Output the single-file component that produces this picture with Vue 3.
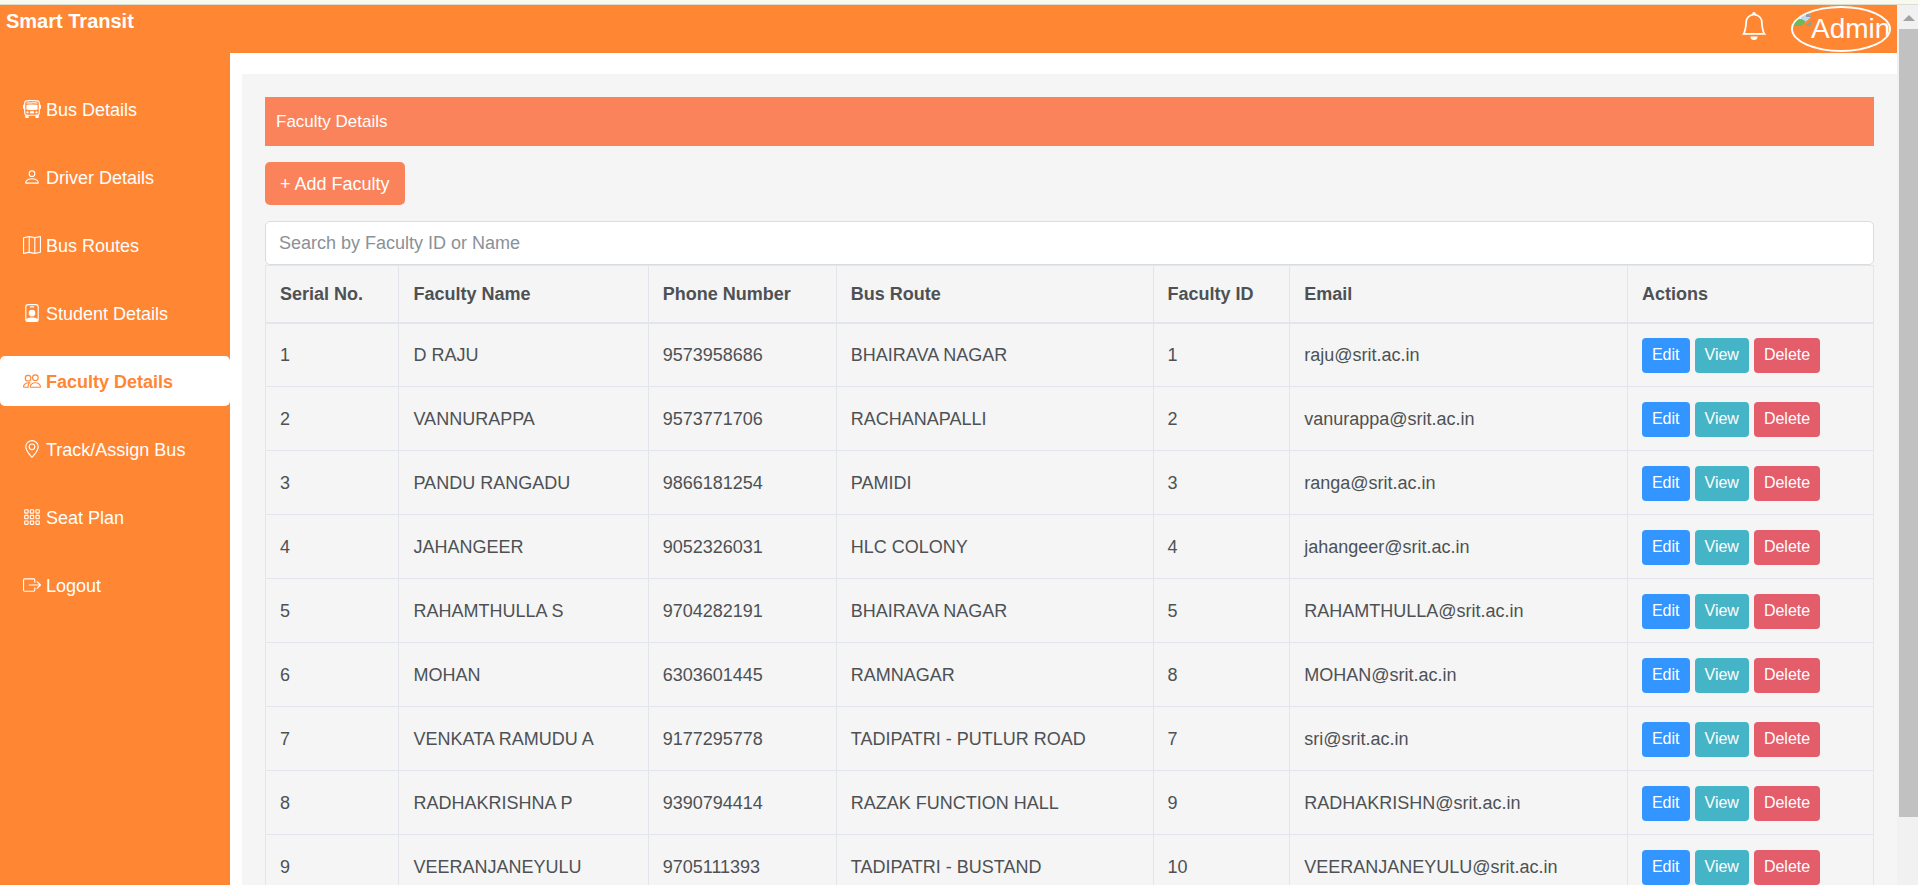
<script setup>
import { ref, computed } from 'vue'

const search = ref('')

const menu = [
  { label: 'Bus Details', icon: 'bus' },
  { label: 'Driver Details', icon: 'person' },
  { label: 'Bus Routes', icon: 'map' },
  { label: 'Student Details', icon: 'badge' },
  { label: 'Faculty Details', icon: 'people', active: true },
  { label: 'Track/Assign Bus', icon: 'pin' },
  { label: 'Seat Plan', icon: 'grid' },
  { label: 'Logout', icon: 'logout' }
]

const icons = {
  bus: [
    'M5 11a1 1 0 1 1-2 0 1 1 0 0 1 2 0m8 0a1 1 0 1 1-2 0 1 1 0 0 1 2 0m-6-1a1 1 0 1 0 0 2h2a1 1 0 1 0 0-2zm1-6c-1.876 0-3.426.109-4.552.226A.5.5 0 0 0 3 4.723v3.554a.5.5 0 0 0 .448.497C4.574 8.891 6.124 9 8 9s3.426-.109 4.552-.226A.5.5 0 0 0 13 8.277V4.723a.5.5 0 0 0-.448-.497A44 44 0 0 0 8 4m0-1c-1.837 0-3.353.107-4.448.22a.5.5 0 1 1-.104-.994A44 44 0 0 1 8 2c1.876 0 3.426.109 4.552.226a.5.5 0 1 1-.104.994A43 43 0 0 0 8 3',
    'M15 8a1 1 0 0 0 1-1V5a1 1 0 0 0-1-1V2.64c0-1.188-.845-2.232-2.064-2.372A44 44 0 0 0 8 0C5.9 0 4.208.136 3.064.268 1.845.408 1 1.452 1 2.64V4a1 1 0 0 0-1 1v2a1 1 0 0 0 1 1v3.5c0 .818.393 1.544 1 2v2a.5.5 0 0 0 .5.5h2a.5.5 0 0 0 .5-.5V14h6v1.5a.5.5 0 0 0 .5.5h2a.5.5 0 0 0 .5-.5v-2c.607-.456 1-1.182 1-2zM8 1c2.056 0 3.71.134 4.822.261.676.078 1.178.66 1.178 1.379v8.86a1.5 1.5 0 0 1-1.5 1.5h-9A1.5 1.5 0 0 1 2 11.5V2.64c0-.72.502-1.301 1.178-1.379A43 43 0 0 1 8 1'
  ],
  person: [
    'M8 8a3 3 0 1 0 0-6 3 3 0 0 0 0 6m2-3a2 2 0 1 1-4 0 2 2 0 0 1 4 0m4 8c0 1-1 1-1 1H3s-1 0-1-1 1-4 6-4 6 3 6 4m-1-.004c-.001-.246-.154-.986-.832-1.664C11.516 10.68 10.289 10 8 10s-3.516.68-4.168 1.332c-.678.678-.83 1.418-.832 1.664z'
  ],
  map: [
    'M15.817.113A.5.5 0 0 1 16 .5v14a.5.5 0 0 1-.402.49l-5 1a.5.5 0 0 1-.196 0L5.5 15.01l-4.902.98A.5.5 0 0 1 0 15.5v-14a.5.5 0 0 1 .402-.49l5-1a.5.5 0 0 1 .196 0L10.5.99l4.902-.98a.5.5 0 0 1 .415.103M10 1.91l-4-.8v12.98l4 .8zm1 12.98 4-.8V1.11l-4 .8zm-6-.8V1.11l-4 .8v12.98z'
  ],
  badge: [
    'M6.5 2a.5.5 0 0 0 0 1h3a.5.5 0 0 0 0-1zM11 8a3 3 0 1 1-6 0 3 3 0 0 1 6 0',
    'M4.5 0A2.5 2.5 0 0 0 2 2.5V14a2 2 0 0 0 2 2h8a2 2 0 0 0 2-2V2.5A2.5 2.5 0 0 0 11.5 0zM3 2.5A1.5 1.5 0 0 1 4.5 1h7A1.5 1.5 0 0 1 13 2.5v10.795a4.2 4.2 0 0 0-.776-.492C11.392 12.387 10.063 12 8 12s-3.392.387-4.224.803a4.2 4.2 0 0 0-.776.492z'
  ],
  people: [
    'M15 14s1 0 1-1-1-4-5-4-5 3-5 4 1 1 1 1zm-7.978-1L7 12.996c.001-.264.167-1.03.76-1.72C8.312 10.629 9.282 10 11 10c1.717 0 2.687.63 3.24 1.276.593.69.758 1.457.76 1.72l-.008.002-.014.002zM11 7a2 2 0 1 0 0-4 2 2 0 0 0 0 4m3-2a3 3 0 1 1-6 0 3 3 0 0 1 6 0M6.936 9.28a6 6 0 0 0-1.23-.247A7 7 0 0 0 5 9c-4 0-5 3-5 4q0 1 1 1h4.216A2.24 2.24 0 0 1 5 13c0-1.01.377-2.042 1.09-2.904.243-.294.526-.569.846-.816M4.92 10A5.5 5.5 0 0 0 4 13H1c0-.26.164-1.03.76-1.724.545-.636 1.492-1.256 3.16-1.275ZM1.5 5.5a3 3 0 1 1 6 0 3 3 0 0 1-6 0m3-2a2 2 0 1 0 0 4 2 2 0 0 0 0-4'
  ],
  pin: [
    'M12.166 8.94c-.524 1.062-1.234 2.12-1.96 3.07A32 32 0 0 1 8 14.58a32 32 0 0 1-2.206-2.57c-.726-.95-1.436-2.008-1.96-3.07C3.304 7.867 3 6.862 3 6a5 5 0 0 1 10 0c0 .862-.305 1.867-.834 2.94M8 16s6-5.686 6-10A6 6 0 0 0 2 6c0 4.314 6 10 6 10',
    'M8 8a2 2 0 1 1 0-4 2 2 0 0 1 0 4m0 1a3 3 0 1 0 0-6 3 3 0 0 0 0 6'
  ],
  grid: [1, 6, 11].flatMap(y => [1, 6, 11].map(x =>
    `M${x + 1} ${y}h2a1 1 0 0 1 1 1v2a1 1 0 0 1-1 1h-2a1 1 0 0 1-1-1v-2a1 1 0 0 1 1-1zm0 1v2h2v-2z`
  )),
  logout: [
    'M10 12.5a.5.5 0 0 1-.5.5h-8a.5.5 0 0 1-.5-.5v-9a.5.5 0 0 1 .5-.5h8a.5.5 0 0 1 .5.5v2a.5.5 0 0 0 1 0v-2A1.5 1.5 0 0 0 9.5 2h-8A1.5 1.5 0 0 0 0 3.5v9A1.5 1.5 0 0 0 1.5 14h8a1.5 1.5 0 0 0 1.500-1.5v-2a.5.5 0 0 0-1 0z',
    'M15.854 8.354a.5.5 0 0 0 0-.708l-3-3a.5.5 0 0 0-.708.708L14.293 7.5H5.5a.5.5 0 0 0 0 1h8.793l-2.147 2.146a.5.5 0 0 0 .708.708z'
  ]
}

const columns = ['Serial No.', 'Faculty Name', 'Phone Number', 'Bus Route', 'Faculty ID', 'Email', 'Actions']

const faculty = [
  [1, 'D RAJU', '9573958686', 'BHAIRAVA NAGAR', '1', 'raju@srit.ac.in'],
  [2, 'VANNURAPPA', '9573771706', 'RACHANAPALLI', '2', 'vanurappa@srit.ac.in'],
  [3, 'PANDU RANGADU', '9866181254', 'PAMIDI', '3', 'ranga@srit.ac.in'],
  [4, 'JAHANGEER', '9052326031', 'HLC COLONY', '4', 'jahangeer@srit.ac.in'],
  [5, 'RAHAMTHULLA S', '9704282191', 'BHAIRAVA NAGAR', '5', 'RAHAMTHULLA@srit.ac.in'],
  [6, 'MOHAN', '6303601445', 'RAMNAGAR', '8', 'MOHAN@srit.ac.in'],
  [7, 'VENKATA RAMUDU A', '9177295778', 'TADIPATRI - PUTLUR ROAD', '7', 'sri@srit.ac.in'],
  [8, 'RADHAKRISHNA P', '9390794414', 'RAZAK FUNCTION HALL', '9', 'RADHAKRISHN@srit.ac.in'],
  [9, 'VEERANJANEYULU', '9705111393', 'TADIPATRI - BUSTAND', '10', 'VEERANJANEYULU@srit.ac.in']
]

const visible = computed(() => {
  const q = search.value.trim().toLowerCase()
  return faculty.filter(r => !q || r[1].toLowerCase().includes(q) || r[4].includes(q))
})
</script>

<template>
  <div class="shell">
    <div class="strip"></div>
    <div class="window">
      <div class="page">
        <header class="topbar">
          <h1 class="brand">Smart Transit</h1>
          <div class="tools">
            <button class="bell" type="button" aria-label="Notifications">
              <svg viewBox="0 0 16 16" width="28" height="28" fill="currentColor" aria-hidden="true">
                <path d="M8 16a2 2 0 0 0 2-2H6a2 2 0 0 0 2 2M8 1.918l-.797.161A4 4 0 0 0 4 6c0 .628-.134 2.197-.459 3.742-.16.767-.376 1.566-.663 2.258h10.244c-.287-.692-.502-1.49-.663-2.258C12.134 8.197 12 6.628 12 6a4 4 0 0 0-3.203-3.92zM14.22 12c.223.447.481.801.78 1H1c.299-.199.557-.553.78-1C2.68 10.2 3 6.88 3 6c0-2.42 1.72-4.44 4.005-4.901a1 1 0 1 1 1.99 0A5 5 0 0 1 13 6c0 .88.32 4.2 1.22 6" />
              </svg>
            </button>
            <button class="avatar" type="button">
              <svg class="broken" viewBox="0 0 18 18" width="18" height="18" aria-hidden="true">
                <path fill="#c3d7f3" d="M0 1h14l4 4v4l-8 6H0z" />
                <path fill="#fff" d="M3 8c0-2 2-2 2-2 1-1 3 0 3 2z" />
                <path fill="#6cbb5a" d="M0 15v-4c3-4 8-4 12-1l1 1-4 4z" />
                <path fill="#8f9dab" d="M13 1v5h5V5l-4-4z" />
                <path fill="#ff8633" d="M18 6 8 15h4l6-5z" />
                <path fill="#86a596" d="m18 10-6 5h6z" />
              </svg>
              <span>Admin</span>
            </button>
          </div>
        </header>
        <div class="body">
          <nav class="sidebar" aria-label="Main">
            <a v-for="m in menu" :key="m.label" href="#" class="item" :class="{ active: m.active }">
              <svg viewBox="0 0 16 16" width="18" height="18" fill="currentColor" fill-rule="evenodd" aria-hidden="true">
                <path v-for="(d, i) in icons[m.icon]" :key="i" :d="d" />
              </svg>
              <span>{{ m.label }}</span>
            </a>
          </nav>
          <main class="content">
            <h2 class="banner">Faculty Details</h2>
            <button class="add" type="button">+ Add Faculty</button>
            <input v-model="search" class="search" type="text" placeholder="Search by Faculty ID or Name" aria-label="Search by Faculty ID or Name" />
            <table class="grid">
              <colgroup>
                <col v-for="c in columns" :key="c" :class="'c-' + c.toLowerCase().replace(/\W+/g, '')" />
              </colgroup>
              <thead>
                <tr><th v-for="c in columns" :key="c" scope="col">{{ c }}</th></tr>
              </thead>
              <tbody>
                <tr v-for="r in visible" :key="r[0]">
                  <td v-for="(v, i) in r" :key="i">{{ v }}</td>
                  <td>
                    <div class="actions">
                      <button class="edit" type="button">Edit</button>
                      <button class="view" type="button">View</button>
                      <button class="delete" type="button">Delete</button>
                    </div>
                  </td>
                </tr>
              </tbody>
            </table>
          </main>
        </div>
      </div>
      <div class="scroll" aria-hidden="true">
        <svg viewBox="0 0 12 6" width="12" height="6"><path fill="#a3a3a3" d="M6 0l6 6H0z" /></svg>
        <div class="thumb"></div>
        <div class="rest"></div>
      </div>
    </div>
  </div>
</template>

<style>
body {
  margin: 0;
  overflow: hidden;
}
</style>

<style scoped>
* {
  box-sizing: border-box;
}
.shell {
  display: flex;
  flex-direction: column;
  height: 100vh;
  font: 18px/26px "Liberation Sans", Arial, sans-serif;
  color: #4d5154;
  background: #fff;
}
button,
input {
  font: inherit;
}
button {
  border: 0;
  color: #fff;
  cursor: pointer;
}
.strip {
  flex: none;
  height: 5px;
  background: #f8faf0;
  border-bottom: 1px solid #dcdfd0;
}
.window {
  display: flex;
  flex: 1;
  min-height: 0;
}
.page {
  display: flex;
  flex-direction: column;
  flex: 1;
  min-width: 0;
}
.topbar {
  display: flex;
  flex: none;
  justify-content: space-between;
  height: 48px;
  padding: 0 6px;
  background: #ff8633;
  color: #fff;
}
.brand {
  margin: 0;
  padding-top: 3px;
  font-size: 20px;
  line-height: 26px;
}
.tools {
  display: flex;
  align-items: center;
  gap: 23px;
}
.bell {
  display: flex;
  padding: 0;
  margin-bottom: 6px;
  background: none;
}
.avatar {
  display: flex;
  width: 100px;
  height: 46px;
  padding: 3px 0 0;
  overflow: hidden;
  border: 2px solid #fff;
  border-radius: 50%;
  background: none;
  font-size: 28px;
  line-height: 36px;
}
.broken {
  flex: none;
}
.body {
  display: flex;
  flex: 1;
  min-height: 0;
  overflow: hidden;
}
.sidebar {
  display: flex;
  flex: none;
  flex-direction: column;
  gap: 18px;
  width: 230px;
  padding-top: 31px;
  background: #ff8633;
}
.item {
  display: flex;
  flex: none;
  align-items: center;
  gap: 5px;
  height: 50px;
  padding: 0 23px;
  border-radius: 5px;
  color: #fff;
  text-decoration: none;
  white-space: nowrap;
}
.item span {
  padding-top: 2px;
}
.item.active {
  background: #fff;
  color: #ff8633;
  font-weight: bold;
}
.content {
  flex: 1;
  min-width: 0;
  height: max-content;
  margin: 21px 0 0 12px;
  padding: 23px;
  background: #f5f5f5;
}
.banner {
  margin: 0 0 16px;
  padding: 12px 11px;
  background: #fa835b;
  color: #fff;
  font-size: 17px;
  font-weight: normal;
  line-height: 25px;
}
.add {
  display: block;
  height: 43px;
  margin-bottom: 16px;
  padding: 0 15px;
  border-radius: 5px;
  background: #fa835b;
}
.search {
  display: block;
  width: 100%;
  height: 44px;
  padding: 0 13px;
  border: 1px solid #d8dde1;
  border-radius: 5px;
  background: #fff;
  color: #4d5154;
}
.search::placeholder {
  color: #8a9197;
  opacity: 1;
}
.grid {
  width: 100%;
  table-layout: fixed;
  border-collapse: collapse;
}
.c-serialno { width: 8.3%; }
.c-facultyname { width: 15.5%; }
.c-phonenumber { width: 11.7%; }
.c-busroute { width: 19.7%; }
.c-facultyid { width: 8.5%; }
.c-email { width: 21%; }
.c-actions { width: 15.3%; }
th,
td {
  height: 64px;
  padding: 1px 14px 0;
  border: 1px solid #e2e6ea;
  text-align: left;
  white-space: nowrap;
}
th {
  height: 57px;
  border-bottom-width: 2px;
}
.actions {
  display: flex;
  gap: 5px;
}
.actions button {
  height: 35px;
  padding: 0 10px;
  border-radius: 4px;
  font-size: 16px;
}
.edit {
  background: #3395ff;
}
.view {
  background: #45b4c6;
}
.delete {
  background: #e35d6a;
}
.scroll {
  display: flex;
  flex: none;
  flex-direction: column;
  align-items: center;
  width: 21px;
  padding: 10px 0 0 2px;
  background: #f1f1f1;
}
.scroll svg {
  flex: none;
  margin-bottom: 8px;
}
.thumb {
  flex: 23;
  width: 100%;
  background: #c1c1c1;
}
.rest {
  flex: 2;
}
</style>
